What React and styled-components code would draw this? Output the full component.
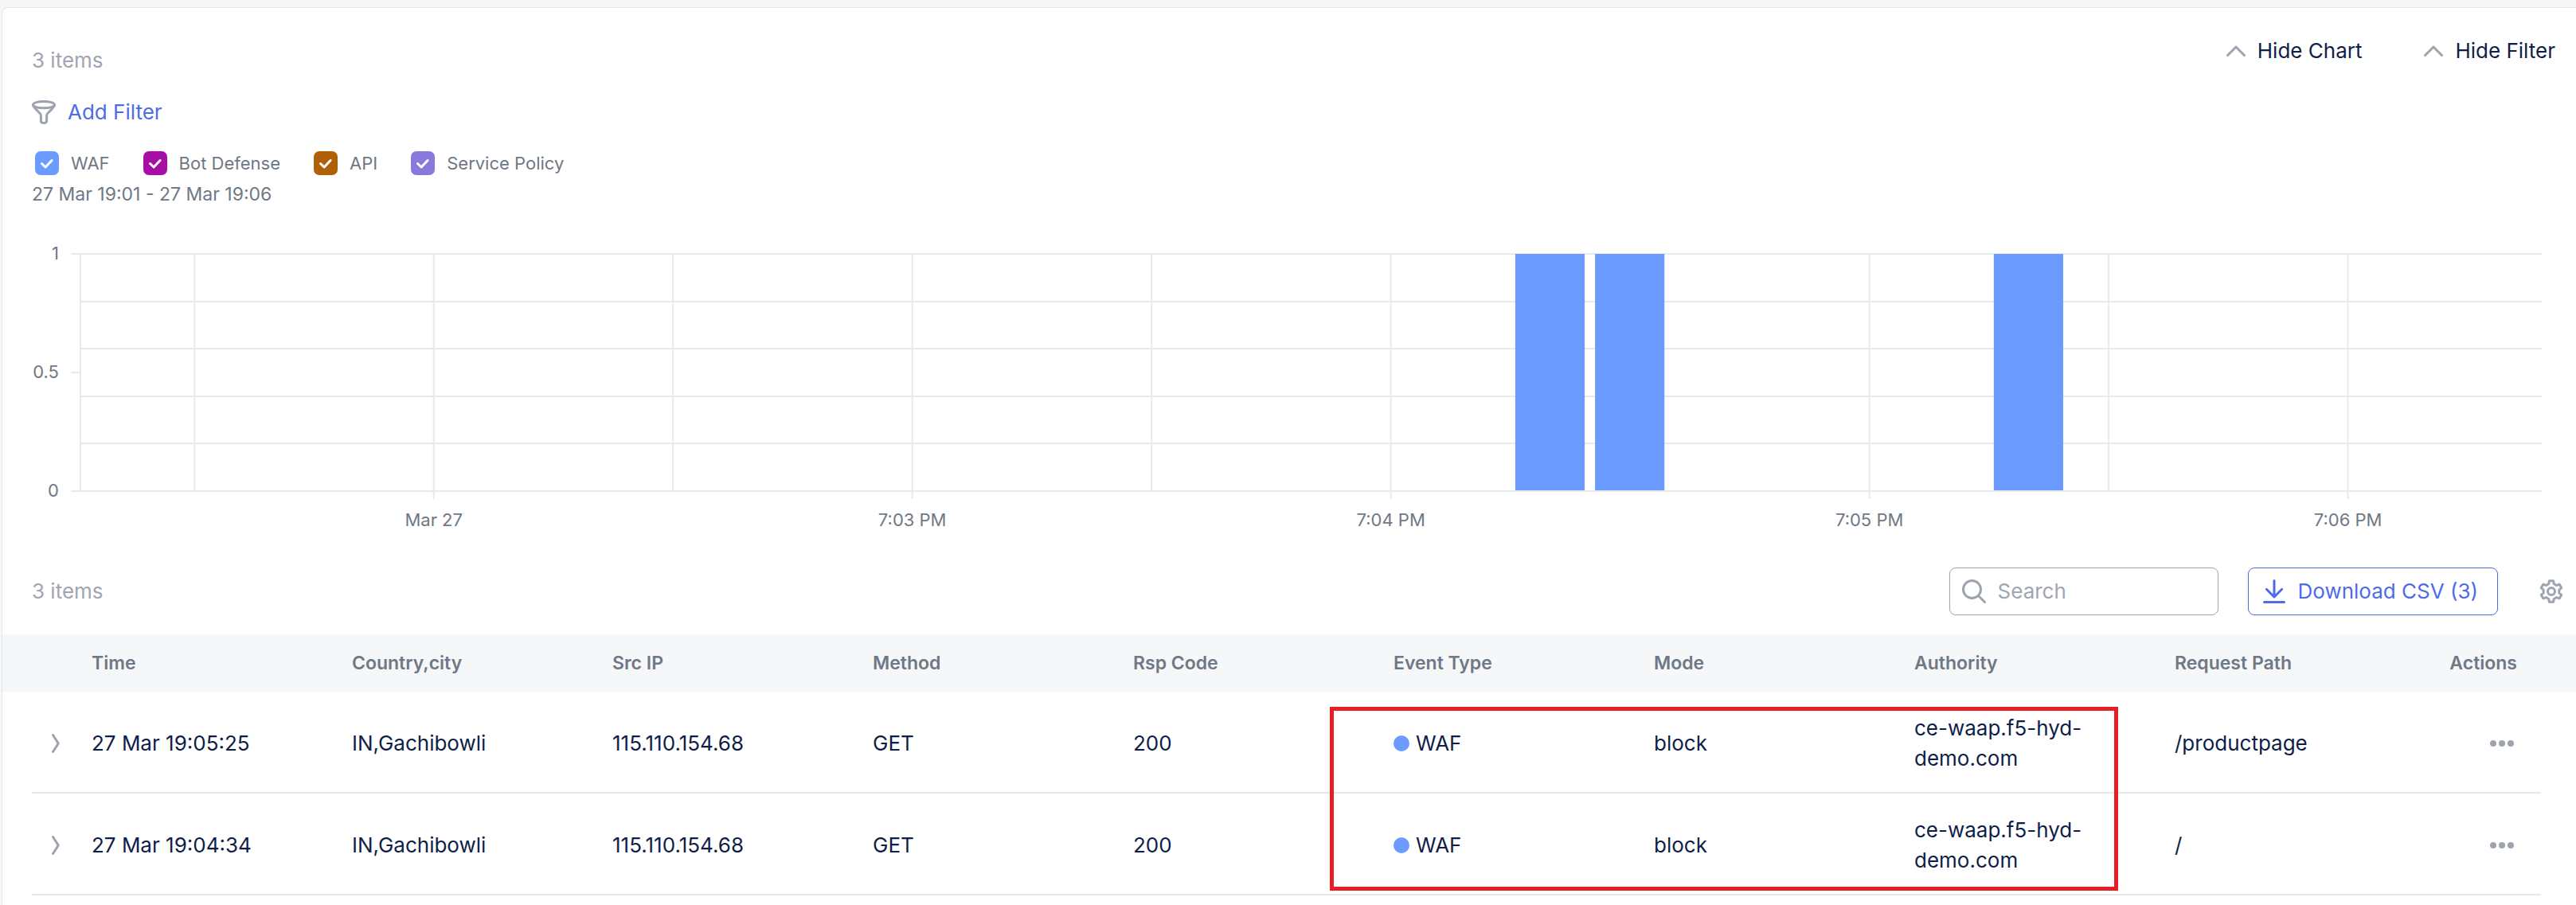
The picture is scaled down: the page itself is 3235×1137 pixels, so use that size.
import React from "react";
import styled, { createGlobalStyle } from "styled-components";

const color = {
  page: "#f5f7f9",
  card: "#ffffff",
  edge: "#e3e7ec",
  grid: "#e8e9ed",
  rule: "#e6e7e9",
  ink: "#0f1e48",
  label: "#6f7885",
  muted: "#a0a5b1",
  icon: "#9da3af",
  link: "#4f6be6",
  bar: "#6b9bff",
  alert: "#e61e25",
};

const GlobalStyle = createGlobalStyle`
  * { box-sizing: border-box; }
  body {
    margin: 0;
    background: ${color.page};
    color: ${color.ink};
    font: 400 26px/32px Inter, "Liberation Sans", sans-serif;
  }
  button, input { font: inherit; color: inherit; }
`;

const Page = styled.div`
  display: flex;
  min-height: 100vh;
  padding: 9px 0 0 2px;
`;

const Card = styled.main`
  flex: 1;
  min-width: 0;
  padding-top: 38px;
  background: ${color.card};
  border: solid ${color.edge};
  border-width: 1px 0 0 1px;
  border-top-left-radius: 8px;
`;

const TopBar = styled.header`
  display: flex;
  justify-content: space-between;
  height: 44px;
  padding: 0 26px 0 37px;
`;

const Count = styled.span`
  align-self: ${(p) => p.$align || "center"};
  color: ${color.muted};
`;

const Toggles = styled.div`
  display: flex;
  align-items: flex-start;
  gap: 78px;
`;

const PlainButton = styled.button`
  display: flex;
  align-items: center;
  gap: 15px;
  padding: 0;
  border: 0;
  background: none;
  color: ${(p) => p.$color || color.ink};
  cursor: pointer;
`;

const Icon = styled.svg`
  display: block;
  flex: none;
  fill: none;
  stroke: ${(p) => p.$stroke || color.icon};
  stroke-width: 3;
  stroke-linecap: round;
  stroke-linejoin: round;
`;

const FilterRow = styled.div`
  display: flex;
  margin-top: 33px;
  padding-left: 37px;
`;

const Legend = styled.div`
  display: flex;
  gap: 42px;
  margin-top: 33px;
  padding-left: 41px;
`;

const LegendItem = styled.label`
  display: flex;
  align-items: center;
  gap: 15px;
  color: ${color.label};
  font-size: 22px;
  line-height: 30px;
`;

const CheckBox = styled.span`
  display: grid;
  > * { grid-area: 1 / 1; }
  > svg { pointer-events: none; }
`;

const CheckInput = styled.input`
  appearance: none;
  width: 30px;
  height: 30px;
  margin: 0;
  border-radius: 7px;
  background: ${(p) => p.$color};
`;

const Period = styled.p`
  margin: 10px 0 0;
  padding-left: 37px;
  color: ${color.label};
  font-size: 23px;
  line-height: 28px;
`;

const ChartFrame = styled.section`
  margin-top: 42px;
  padding: 0 43px 0 98px;
`;

const Plot = styled.svg`
  display: block;
  width: 100%;
  height: 372px;
  overflow: visible;
  line { stroke: ${color.grid}; stroke-width: 2; }
  rect { fill: ${color.bar}; }
  text { fill: ${color.label}; font-size: 22px; }
`;

const Toolbar = styled.div`
  display: flex;
  align-items: center;
  margin-top: 41px;
  padding: 0 16px 24px 37px;
`;

const SearchBox = styled.label`
  display: flex;
  align-items: center;
  gap: 15px;
  width: 338px;
  height: 60px;
  margin-left: auto;
  padding: 0 15px;
  border: 1px solid ${color.icon};
  border-radius: 8px;
`;

const SearchInput = styled.input`
  flex: 1;
  min-width: 0;
  padding: 0;
  border: 0;
  outline: 0;
  background: none;
  &::placeholder { color: ${color.muted}; opacity: 1; }
`;

const DownloadButton = styled(PlainButton)`
  gap: 16px;
  height: 60px;
  margin: 0 52px 0 37px;
  padding: 0 24px 0 18px;
  border: 1px solid ${color.link};
  border-radius: 8px;
`;

const TableFrame = styled.section`
  position: relative;
`;

const Table = styled.table`
  display: block;
  thead, tbody { display: block; }
`;

const Row = styled.tr`
  display: grid;
  grid-template-columns: 75px repeat(9, minmax(0, 1fr)) 133px;
  align-items: center;
`;

const HeadRow = styled(Row)`
  height: 72px;
  padding: 0 44px 0 37px;
  background: ${color.page};
`;

const BodyRow = styled(Row)`
  min-height: 128px;
  margin: 0 44px 0 37px;
  padding-top: 4px;
  border-bottom: 2px solid ${color.rule};
`;

const HeadCell = styled.th`
  padding: ${(p) => (p.$end ? "0 30px 0 0" : "0")};
  color: ${color.label};
  font-size: 23px;
  font-weight: 600;
  text-align: ${(p) => (p.$end ? "right" : "left")};
`;

const Cell = styled.td`
  padding: 0 24px 0 0;
  line-height: 38px;
`;

const ExpandCell = styled.td`
  padding: 0 0 0 25px;
`;

const ActionCell = styled.td`
  display: flex;
  justify-content: flex-end;
  padding: 0 34px 0 0;
`;

const EventType = styled.span`
  display: flex;
  align-items: center;
  gap: 8px;
  &::before {
    content: "";
    width: 20px;
    height: 20px;
    border-radius: 50%;
    background: ${color.bar};
  }
`;

/* Frames the event type, mode and authority columns of both rows. */
const Highlight = styled.div`
  position: absolute;
  top: 91px;
  left: calc(33px + (100% - 290px) * 5 / 9);
  width: calc((100% - 290px) / 3 + 9px);
  height: 231px;
  border: 5px solid ${color.alert};
  pointer-events: none;
`;

const legend = [
  { name: "WAF", color: "#6b9bff" },
  { name: "Bot Defense", color: "#a50fa5" },
  { name: "API", color: "#b06006" },
  { name: "Service Policy", color: "#8b78dc" },
];

const columns = [
  "Time", "Country,city", "Src IP", "Method", "Rsp Code",
  "Event Type", "Mode", "Authority", "Request Path",
];

const events = [
  ["27 Mar 19:05:25", "IN,Gachibowli", "115.110.154.68", "GET", "200", "WAF", "block", "ce-waap.f5-hyd-demo.com", "/productpage"],
  ["27 Mar 19:04:34", "IN,Gachibowli", "115.110.154.68", "GET", "200", "WAF", "block", "ce-waap.f5-hyd-demo.com", "/"],
];

/* Chart scale: seconds after the left edge of the time axis. */
const SPAN = 308.6;
const at = (seconds) => `${(seconds / SPAN) * 100}%`;
const FIRST_LINE = 14.3;
const timeLines = Array.from({ length: 10 }, (_, i) => FIRST_LINE + i * 30);
const tickLabels = { 1: "Mar 27", 3: "7:03 PM", 5: "7:04 PM", 7: "7:05 PM", 9: "7:06 PM" };
const bars = [179.9, 189.9, 239.9];
const BAR_WIDTH = 8.7;
const PLOT_TOP = 19;
const PLOT_HEIGHT = 298;
const levels = [
  { y: PLOT_TOP, text: "1" },
  { y: PLOT_TOP + PLOT_HEIGHT / 2, text: "0.5" },
  { y: PLOT_TOP + PLOT_HEIGHT, text: "0" },
];

function Chart() {
  const bottom = PLOT_TOP + PLOT_HEIGHT;
  return (
    <ChartFrame>
      <Plot role="img" aria-label="Events over time">
        {[0, 1, 2, 3, 4, 5].map((i) => {
          const y = PLOT_TOP + Math.round((PLOT_HEIGHT * i) / 5);
          return <line key={i} x1="0" x2="100%" y1={y} y2={y} />;
        })}
        <line x1="0" x2="0" y1={PLOT_TOP} y2={bottom} />
        {timeLines.map((s, i) => (
          <line key={s} x1={at(s)} x2={at(s)} y1={PLOT_TOP} y2={tickLabels[i] ? bottom + 10 : bottom} />
        ))}
        {levels.map(({ y, text }) => (
          <g key={text}>
            <line x1="-12" x2="0" y1={y} y2={y} />
            <text x="-27" y={y + 7} textAnchor="end">{text}</text>
          </g>
        ))}
        {bars.map((s) => (
          <rect key={s} x={at(s)} y={PLOT_TOP} width={at(BAR_WIDTH)} height={PLOT_HEIGHT - 1} />
        ))}
        {Object.entries(tickLabels).map(([i, text]) => (
          <text key={text} x={at(timeLines[i])} y={bottom + 44} textAnchor="middle">{text}</text>
        ))}
      </Plot>
    </ChartFrame>
  );
}

const gearPath = (() => {
  const point = (radius, degrees) => {
    const a = (degrees * Math.PI) / 180;
    return `${(15 + radius * Math.sin(a)).toFixed(2)} ${(15 - radius * Math.cos(a)).toFixed(2)}`;
  };
  const points = [];
  for (let k = 0; k < 6; k += 1) {
    const c = k * 60;
    points.push(point(10, c - 19), point(13.5, c - 11), point(13.5, c + 11), point(10, c + 19));
  }
  return `M${points.join("L")}Z`;
})();

const ChevronUp = () => (
  <Icon width="24" height="24" viewBox="0 0 24 24"><path d="M1.5 17.5 12 7l10.5 10.5" /></Icon>
);

export default function App() {
  return (
    <>
      <GlobalStyle />
      <Page>
        <Card>
          <TopBar>
            <Count $align="flex-end">3 items</Count>
            <Toggles>
              <PlainButton type="button"><ChevronUp />Hide Chart</PlainButton>
              <PlainButton type="button"><ChevronUp />Hide Filter</PlainButton>
            </Toggles>
          </TopBar>

          <FilterRow>
            <PlainButton type="button" $color={color.link}>
              <Icon width="30" height="30" viewBox="0 0 30 30">
                <ellipse cx="15" cy="5.6" rx="13.5" ry="4.2" />
                <path d="M1.5 6.5c.4 1.6 2 3 3.500 4.600l5 5.200c.9 1 1.400 2 1.400 3.200V26c0 1.800 1.200 2.500 3.600 2.500s3.600-.7 3.600-2.500v-6.500c0-1.200.5-2.200 1.400-3.200l5-5.200c1.500-1.600 3.100-3 3.500-4.600" />
              </Icon>
              Add Filter
            </PlainButton>
          </FilterRow>

          <Legend>
            {legend.map((item) => (
              <LegendItem key={item.name}>
                <CheckBox>
                  <CheckInput type="checkbox" defaultChecked $color={item.color} />
                  <Icon width="30" height="30" viewBox="0 0 30 30" $stroke="#fff">
                    <path d="m8.500 15.500 4.600 4.500 8-8.500" />
                  </Icon>
                </CheckBox>
                {item.name}
              </LegendItem>
            ))}
          </Legend>
          <Period>27 Mar 19:01 - 27 Mar 19:06</Period>

          <Chart />

          <Toolbar>
            <Count>3 items</Count>
            <SearchBox>
              <Icon width="30" height="30" viewBox="0 0 30 30">
                <circle cx="12.500" cy="12.500" r="11" />
                <path d="m20.500 20.500 8 8" />
              </Icon>
              <SearchInput type="text" placeholder="Search" aria-label="Search" />
            </SearchBox>
            <DownloadButton type="button" $color={color.link}>
              <Icon width="28" height="30" viewBox="0 0 28 30" $stroke={color.link}>
                <path d="M14 1.500v20.500M4.300 12.300 14 22l9.700-9.700M1.500 28.500h25" />
              </Icon>
              Download CSV (3)
            </DownloadButton>
            <PlainButton type="button" aria-label="Table settings">
              <Icon width="30" height="30" viewBox="0 0 30 30">
                <path d={gearPath} />
                <circle cx="15" cy="15" r="4.500" />
              </Icon>
            </PlainButton>
          </Toolbar>

          <TableFrame>
            <Table>
              <thead>
                <HeadRow>
                  <td />
                  {columns.map((name) => <HeadCell key={name} scope="col">{name}</HeadCell>)}
                  <HeadCell scope="col" $end>Actions</HeadCell>
                </HeadRow>
              </thead>
              <tbody>
                {events.map((event) => (
                  <BodyRow key={event[0]}>
                    <ExpandCell>
                      <PlainButton type="button" aria-label="Expand row">
                        <Icon width="10" height="24" viewBox="0 0 10 24"><path d="m1.500 1.500 6.800 10.500-6.800 10.500" /></Icon>
                      </PlainButton>
                    </ExpandCell>
                    {event.map((value, i) => (
                      <Cell key={columns[i]}>
                        {columns[i] === "Event Type" ? <EventType>{value}</EventType> : value}
                      </Cell>
                    ))}
                    <ActionCell>
                      <PlainButton type="button" aria-label="Row actions">
                        <svg width="30" height="8" viewBox="0 0 30 8" fill={color.icon}>
                          <circle cx="4" cy="4" r="4" />
                          <circle cx="15" cy="4" r="4" />
                          <circle cx="26" cy="4" r="4" />
                        </svg>
                      </PlainButton>
                    </ActionCell>
                  </BodyRow>
                ))}
              </tbody>
            </Table>
            <Highlight />
          </TableFrame>
        </Card>
      </Page>
    </>
  );
}
